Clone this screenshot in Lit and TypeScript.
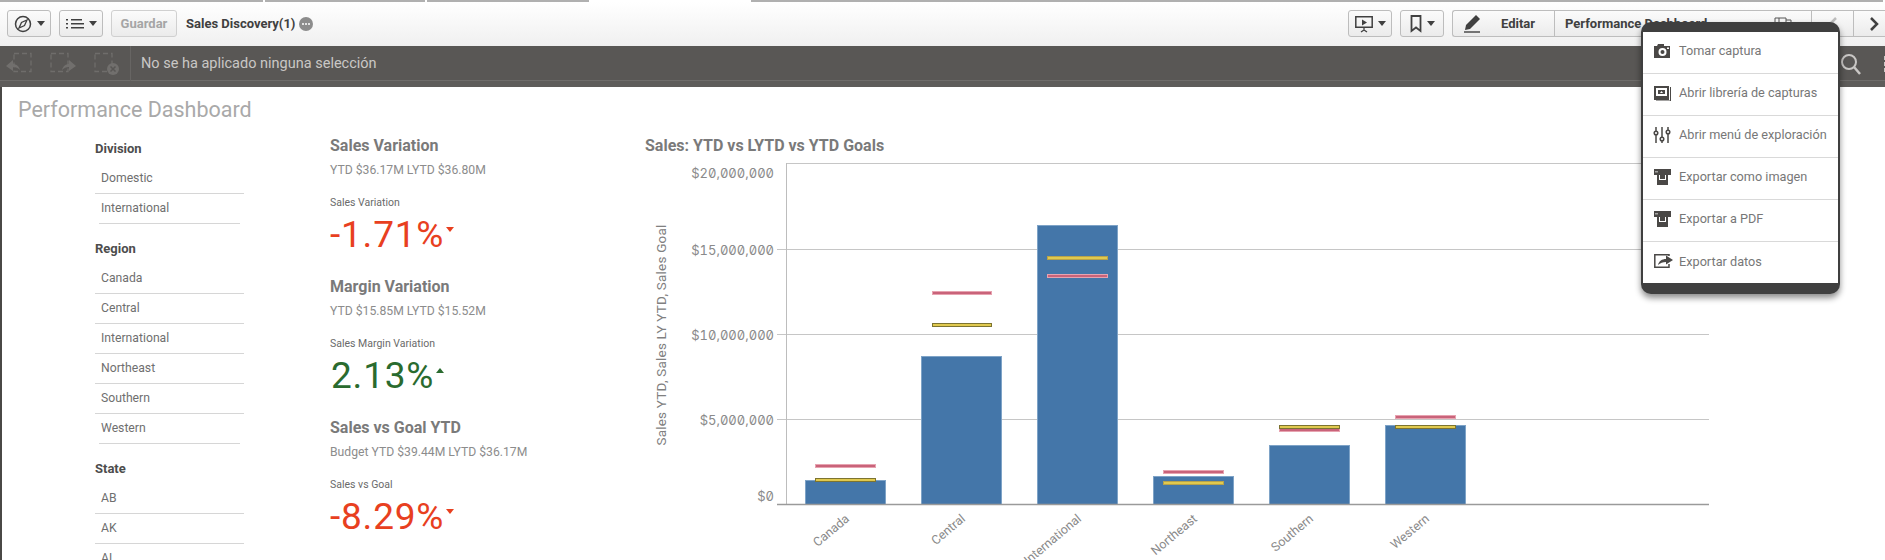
import { LitElement, html, css, svg } from "lit";
import { customElement } from "lit/decorators.js";

const caret = html`<span class="caret"></span>`;

const filters = [
  { name: "Division", items: ["Domestic", "International"] },
  { name: "Region", items: ["Canada", "Central", "International", "Northeast", "Southern", "Western"] },
  { name: "State", items: ["AB", "AK", "AL"] },
];

const kpis = [
  { title: "Sales Variation", sub: "YTD $36.17M LYTD $36.80M", label: "Sales Variation", value: "-1.71%", up: false },
  { title: "Margin Variation", sub: "YTD $15.85M LYTD $15.52M", label: "Sales Margin Variation", value: "2.13%", up: true },
  { title: "Sales vs Goal YTD", sub: "Budget YTD $39.44M LYTD $36.17M", label: "Sales vs Goal", value: "-8.29%", up: false },
];

const bars = [
  { n: "Canada", x: 805, top: 480, mx: 815, mw: 60, red: 466, yel: 480, ys: "#7d7430" },
  { n: "Central", x: 921, top: 356, mx: 932, mw: 59, red: 293, yel: 325, ys: "#7d7430" },
  { n: "International", x: 1037, top: 225, mx: 1047, mw: 60, red: 276, yel: 258, ys: "#b8a34a" },
  { n: "Northeast", x: 1153, top: 476, mx: 1163, mw: 60, red: 472, yel: 483, ys: "#b8a34a" },
  { n: "Southern", x: 1269, top: 445, mx: 1279, mw: 60, red: 430, yel: 427, ys: "#7d7430" },
  { n: "Western", x: 1385, top: 425, mx: 1395, mw: 60, red: 417, yel: 427, ys: "#7d7430" },
];

const yLabels = [
  { t: "$20,000,000", y: 173 },
  { t: "$15,000,000", y: 250 },
  { t: "$10,000,000", y: 335 },
  { t: "$5,000,000", y: 420 },
  { t: "$0", y: 496 },
];

const grid = [163, 249, 334, 419];

const menu = [
  {
    t: "Tomar captura",
    i: svg`<path fill="#4a4846" d="M1 4h3l1-2h6v2h6v12H1z"/><circle cx="9.500" cy="10" r="4" fill="#fff"/><circle cx="9.500" cy="10" r="2" fill="#4a4846"/><rect x="14" y="5.500" width="2" height="1.500" fill="#fff"/>`,
  },
  {
    t: "Abrir librería de capturas",
    i: svg`<path fill="#4a4846" d="M1 2h15v14H1z"/><path fill="#4a4846" d="M17 3h1v14H3v-.6h14z"/><rect x="3" y="4" width="11" height="8" fill="#fff"/><rect x="5" y="6" width="7" height="4" fill="#4a4846"/><path d="M7 9l1.500-2 1.500 2z" fill="#fff"/>`,
  },
  {
    t: "Abrir menú de exploración",
    i: svg`<g stroke="#4a4846" stroke-width="1.500" fill="#fff"><path d="M3 1v16M9 1v16M15 1v16" fill="none"/><circle cx="3" cy="7" r="1.800"/><circle cx="9" cy="13" r="1.800"/><circle cx="15" cy="6" r="1.800"/></g>`,
  },
  {
    t: "Exportar como imagen",
    i: svg`<path fill="#4a4846" d="M1 1h17v6h-3v10H4V7H1z"/><path fill="#fff" d="M2 3.500h3v.8H2zM6 7h1v4h5V7h1v5H6z"/>`,
  },
  {
    t: "Exportar a PDF",
    i: svg`<path fill="#4a4846" d="M1 1h17v6h-3v10H4V7H1z"/><path fill="#fff" d="M2 3.500h3v.8H2zM6 7h1v4h5V7h1v5H6z"/>`,
  },
  {
    t: "Exportar datos",
    i: svg`<path fill="none" stroke="#4a4846" stroke-width="1.500" d="M16 4V2.800H1.800v12.400H16V12"/><path fill="#4a4846" d="M5 13c1-4 4-6 8-6V3.500L20 8l-7 4.500V10c-3 0-6 1-8 3z"/>`,
  },
];

@customElement("app-root")
export class AppRoot extends LitElement {
  static styles = css`
    :host {
      display: block;
      position: relative;
      width: 1885px;
      height: 560px;
      overflow: hidden;
      background: #fff;
      font-family: Roboto, "Noto Sans", sans-serif;
    }
    .tabline { display: flex; height: 2px; }
    .tabline span { background: #b0b0b0; border-right: 2px solid #fff; }
    .tabline .gap { background: #fff; border: 0; }
    .s1 { width: 263px; } .s2 { width: 160px; } .s3 { width: 162px; } .s4 { width: 160px; } .s5 { flex: 1; }

    .toolbar {
      height: 44px;
      box-sizing: border-box;
      display: flex;
      align-items: center;
      padding: 6px 0 7px 7px;
      background: linear-gradient(#ffffff, #f0f0f0);
      white-space: nowrap;
    }
    .btn {
      height: 27px;
      box-sizing: border-box;
      display: flex;
      align-items: center;
      justify-content: center;
      gap: 5px;
      border: 1px solid #bdbdbd;
      border-radius: 3px;
      background: linear-gradient(#fbfbfb, #ebebeb);
      color: #404040;
      font-size: 13px;
      font-weight: 700;
    }
    .w44 { width: 44px; margin-right: 8px; }
    .save { width: 66px; margin-right: 9px; color: #a5a5a5; border-color: #d0d0d0; }
    .caret { width: 0; height: 0; border-left: 4px solid transparent; border-right: 4px solid transparent; border-top: 5px solid #404040; }
    .appname { font-size: 13px; font-weight: 700; color: #404040; margin-right: 4px; }
    .dots { width: 14px; height: 14px; border-radius: 50%; background: #8c8c8c; display: flex; align-items: center; justify-content: center; gap: 1px; }
    .dots i { width: 2px; height: 2px; border-radius: 50%; background: #fff; }
    .spacer { flex: 1; }
    .group {
      display: flex;
      width: 359px;
      height: 27px;
      box-sizing: border-box;
      border: 1px solid #bdbdbd;
      border-right: 0;
      border-radius: 3px 0 0 3px;
      background: linear-gradient(#fbfbfb, #ebebeb);
      font-size: 13px;
      font-weight: 700;
      color: #404040;
      align-items: center;
      flex: none;
    }
    .edit { width: 102px; height: 100%; display: flex; align-items: center; padding-left: 11px; box-sizing: border-box; gap: 20px; border-right: 1px solid #bdbdbd; flex: none; }
    .sheet { flex: 1; padding-left: 10px; display: flex; justify-content: space-between; align-items: center; height: 100%; padding-right: 19px; }
    .nav { width: 42px; height: 27px; box-sizing: border-box; border: 1px solid #bdbdbd; border-right: 0; display: flex; align-items: center; justify-content: center; background: linear-gradient(#fbfbfb, #ebebeb); flex: none; }
    .nav.end { margin-right: -10px; }
    .selbar {
      height: 41px;
      box-sizing: border-box;
      background: #595755;
      border-bottom: 6px solid #5e5c5a;
      box-shadow: inset 0 -1px 0 #6e6c6a;
      display: flex;
      align-items: center;
      padding-top: 6px;
      position: relative;
    }
    .selicons { display: flex; width: 131px; height: 35px; align-items: center; gap: 18px; padding-left: 6px; box-sizing: border-box; border-right: 1px solid #676563; flex: none; margin-top: -6px; }
    .seltext { color: #c9c7c5; font-size: 14.500px; padding-left: 10px; margin-top: -6px; flex: 1; }
    .selright { display: flex; gap: 22px; align-items: center; margin-top: -6px; margin-right: -3px; }
    .vd { display: grid; gap: 2px; }
    .vd i { width: 4px; height: 4px; background: #c9c7c5; }

    .page { border-left: 2px solid #4a4846; height: 473px; box-sizing: border-box; }
    .pagetitle { font-size: 21.500px; line-height: 26px; height: 26px; padding: 10px 0 0 16px; color: #a9a9a9; }
    .main { display: flex; }
    .filters { width: 149px; margin-left: 93px; padding-top: 11px; flex: none; }
    .fname { height: 30px; line-height: 30px; font-size: 13px; font-weight: 700; color: #4d4d4d; }
    .fitem { height: 30px; line-height: 29px; box-sizing: border-box; padding-left: 6px; font-size: 12.200px; color: #6f6f6f; border-bottom: 1px solid #d6d6d6; }
    .fitem.last { margin: 0 4px; padding-left: 2px; }
    .fgroup { margin-bottom: 10px; }
    .kpis { width: 310px; margin-left: 86px; padding-top: 11px; flex: none; }
    .kpi { margin-bottom: 19px; height: 122px; }
    .ktitle { font-size: 16px; line-height: 24px; font-weight: 700; color: #7a7a7a; }
    .ksub { font-size: 12.200px; line-height: 24px; color: #8c8c8c; }
    .klabel { margin-top: 14px; font-size: 10.500px; line-height: 14px; color: #6a6a6a; }
    .kval { display: flex; align-items: flex-start; height: 46px; font-size: 37px; line-height: 50px; letter-spacing: .8px; gap: 2px; }
    .kval.down { color: #e8401f; }
    .kval.up { color: #2a6b2f; padding-left: 1px; }
    .tri { width: 0; height: 0; margin-top: 17px; border-left: 4.500px solid transparent; border-right: 4.500px solid transparent; }
    .down .tri { border-top: 5px solid #e8401f; }
    .up .tri { border-bottom: 5px solid #2a6b2f; }
    .chart { padding-top: 11px; flex: 1; }
    .ctitle { font-size: 16px; line-height: 24px; font-weight: 700; color: #7a7a7a; padding-left: 5px; }
    .chart svg { display: block; }
    .ylab { font-family: Inter, sans-serif; font-feature-settings: "zero", "tnum"; font-size: 13px; fill: #8a8a8a; }
    .ytitle { font-size: 13.500px; fill: #808080; letter-spacing: .2px; }
    .xlab { font-size: 12.500px; fill: #8a8a8a; }

    .menu {
      position: absolute;
      left: 1641px;
      top: 22px;
      width: 199px;
      height: 272px;
      box-sizing: border-box;
      background: #3f3f3f;
      border-radius: 10px;
      padding: 10px 2px 11px;
      box-shadow: 0 4px 6px rgba(0, 0, 0, .45);
    }
    .mbody { background: #fff; height: 100%; }
    .mrow { height: 42px; box-sizing: border-box; display: flex; align-items: center; gap: 6px; padding: 0 0 4px 10px; border-bottom: 1px solid #d9d9d9; color: #777; font-size: 12.700px; white-space: nowrap; }
    .mrow svg { flex: none; }
    .mrow:last-child { border-bottom: 0; }
  `;

  private topIcons() {
    return {
      compass: html`<svg width="18" height="18" viewBox="0 0 18 18"><circle cx="9" cy="9" r="7.500" fill="none" stroke="#404040" stroke-width="1.500"/><path d="M13 5L10.500 10.500 5 13l2.500-5.500z" fill="none" stroke="#404040" stroke-width="1.300"/></svg>`,
      list: html`<svg width="18" height="12" viewBox="0 0 18 12"><path d="M0 1h2v1.500H0zM0 5h2v1.500H0zM0 9h2v1.500H0zM5 1h11v1.500H5zM5 5h13v1.500H5zM5 9h13v1.500H5z" fill="#404040"/></svg>`,
      present: html`<svg width="18" height="18" viewBox="0 0 18 18"><path d="M.8 1.800h16.400v10.400H.8z" fill="none" stroke="#404040" stroke-width="1.500"/><path d="M7 4.500l5 3-5 3z" fill="#404040"/><path d="M9 12v3M6 17l3-2 3 2" fill="none" stroke="#404040" stroke-width="1.300"/></svg>`,
      bookmark: html`<svg width="12" height="18" viewBox="0 0 12 18"><path d="M1.500 1h9v15L6 12.500 1.500 16z" fill="none" stroke="#404040" stroke-width="1.800"/></svg>`,
      pen: html`<svg width="17" height="18" viewBox="0 0 17 18"><path d="M12 0l4 4L6 14l-5 1 1-5z" fill="#404040"/><path d="M0 17h16" stroke="#404040" stroke-width="1.400"/></svg>`,
      sheet: html`<svg width="18" height="16" viewBox="0 0 18 16"><path d="M1 2h11v11H1zM12 4h5v9h-5M5 2v11" fill="none" stroke="#555" stroke-width="1"/></svg>`,
      back: html`<svg width="9" height="14" viewBox="0 0 9 14"><path d="M8 1L2 7l6 6" fill="none" stroke="#bcbcbc" stroke-width="2.500"/></svg>`,
      fwd: html`<svg width="9" height="14" viewBox="0 0 9 14"><path d="M1 1l6 6-6 6" fill="none" stroke="#404040" stroke-width="2.500"/></svg>`,
    };
  }

  private selIcon(kind: number) {
    const box =
      kind === 0
        ? svg`<rect x="8" y="1.500" width="17" height="18" fill="none" stroke="#6f6d6b" stroke-width="1.300" stroke-dasharray="5 3"/>`
        : svg`<rect x="1" y="1.500" width="17" height="18" fill="none" stroke="#6f6d6b" stroke-width="1.300" stroke-dasharray="5 3"/>`;
    const paint =
      kind === 0
        ? svg`<path d="M0 14l7-6v4c3 0 6 2 7 6-2-2-4-3-7-3v4z" fill="#716f6d"/>`
        : kind === 1
          ? svg`<path d="M26 14l-7-6v4c-3 0-6 2-7 6 2-2 4-3 7-3v4z" fill="#716f6d"/>`
          : svg`<circle cx="19" cy="17" r="6" fill="#716f6d"/><path d="M16.500 14.500l5 5m0-5l-5 5" stroke="#595755" stroke-width="1.500"/>`;
    return html`<svg width="26" height="24" viewBox="0 0 26 24">${box}${paint}</svg>`;
  }

  private chart() {
    const base = 504;
    return html`<svg width="1072" height="402" viewBox="640 158 1072 402">
      ${grid.map((y) => svg`<line x1="${y === 163 ? 786 : 777}" x2="1709" y1="${y + 0.5}" y2="${y + 0.5}" stroke="#c6c6c6"/>`)}
      <line x1="786.500" x2="786.500" y1="163" y2="504" stroke="#bdbdbd"/>
      ${yLabels.map((l) => svg`<text class="ylab" x="774" y="${l.y + 5}" text-anchor="end">${l.t}</text>`)}
      <text class="ytitle" transform="translate(666 335) rotate(-90)" text-anchor="middle">Sales YTD, Sales LY YTD, Sales Goal</text>
      ${bars.map(
        (b) => svg`
        <rect x="${b.x + 0.5}" y="${b.top + 0.5}" width="80" height="${base - b.top}" fill="#4476a9" stroke="#7ea3c7"/>
        <rect x="${b.mx + 0.5}" y="${b.red - 1.5}" width="${b.mw}" height="3" fill="#c9637a" stroke="#e7a3b0"/>
        <rect x="${b.mx + 0.5}" y="${b.yel - 1.5}" width="${b.mw}" height="3" fill="#e0c94f" stroke="${b.ys}"/>
        <text class="xlab" transform="translate(${b.x + 45} 520) rotate(-40)" text-anchor="end">${b.n}</text>`
      )}
      <line x1="777" x2="1709" y1="504.500" y2="504.500" stroke="#9a9a9a" stroke-width="1.500"/>
    </svg>`;
  }

  render() {
    const ic = this.topIcons();
    return html`
      <div class="tabline">
        <span class="s1"></span><span class="s2"></span><span class="s3"></span><span class="s4 gap"></span><span class="s5"></span>
      </div>
      <div class="toolbar">
        <div class="btn w44">${ic.compass}${caret}</div>
        <div class="btn w44">${ic.list}${caret}</div>
        <div class="btn save">Guardar</div>
        <div class="appname">Sales Discovery(1)</div>
        <div class="dots"><i></i><i></i><i></i></div>
        <div class="spacer"></div>
        <div class="btn w44">${ic.present}${caret}</div>
        <div class="btn w44">${ic.bookmark}${caret}</div>
        <div class="group">
          <div class="edit">${ic.pen}<span>Editar</span></div>
          <div class="sheet"><span>Performance Dashboard</span>${ic.sheet}</div>
        </div>
        <div class="nav">${ic.back}</div>
        <div class="nav end">${ic.fwd}</div>
      </div>
      <div class="selbar">
        <div class="selicons">${[0, 1, 2].map((k) => this.selIcon(k))}</div>
        <div class="seltext">No se ha aplicado ninguna selección</div>
        <div class="selright">
          <svg width="22" height="22" viewBox="0 0 22 22"><circle cx="9" cy="9" r="7" fill="none" stroke="#c9c7c5" stroke-width="2"/><path d="M14 14l6 7" stroke="#c9c7c5" stroke-width="2.500"/></svg>
          <div class="vd"><i></i><i></i><i></i></div>
        </div>
      </div>
      <div class="page">
        <div class="pagetitle">Performance Dashboard</div>
        <div class="main">
          <div class="filters">
            ${filters.map(
              (f) => html`<div class="fgroup">
                <div class="fname">${f.name}</div>
                ${f.items.map(
                  (it, i) => html`<div class="fitem ${i === f.items.length - 1 ? "last" : ""}">${it}</div>`
                )}
              </div>`
            )}
          </div>
          <div class="kpis">
            ${kpis.map(
              (k) => html`<div class="kpi">
                <div class="ktitle">${k.title}</div>
                <div class="ksub">${k.sub}</div>
                <div class="klabel">${k.label}</div>
                <div class="kval ${k.up ? "up" : "down"}"><span>${k.value}</span><span class="tri"></span></div>
              </div>`
            )}
          </div>
          <div class="chart">
            <div class="ctitle">Sales: YTD vs LYTD vs YTD Goals</div>
            ${this.chart()}
          </div>
        </div>
      </div>
      <div class="menu">
        <div class="mbody">
          ${menu.map(
            (m) => html`<div class="mrow"><svg width="20" height="18" viewBox="0 0 20 18">${m.i}</svg><span>${m.t}</span></div>`
          )}
        </div>
      </div>
    `;
  }
}
